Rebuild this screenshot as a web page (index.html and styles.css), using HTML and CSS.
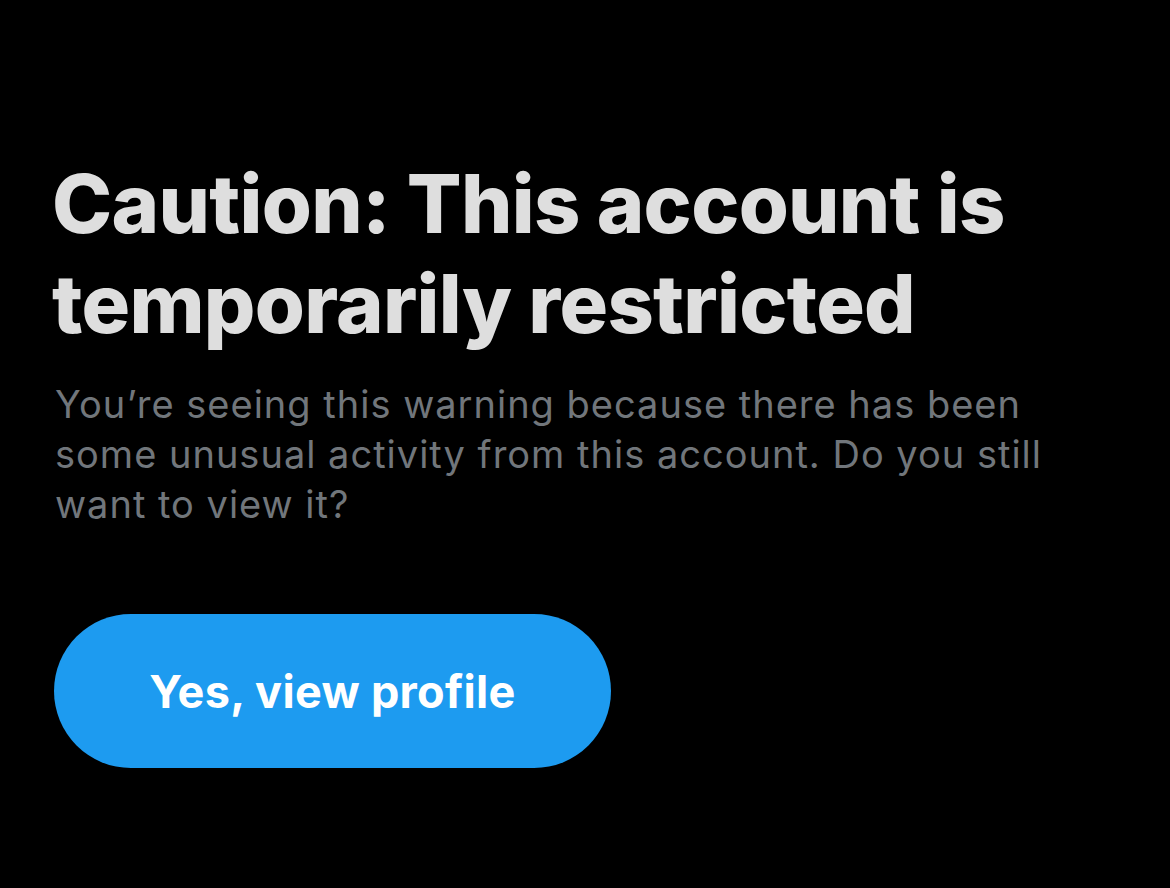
FILE: index.html
```html
<!DOCTYPE html>
<html lang="en">
<head>
<meta charset="utf-8">
<title>Caution</title>
<link rel="stylesheet" href="styles.css">
</head>
<body>
<main class="page">
  <h1 class="title">Caution: This account is temporarily restricted</h1>
  <p class="desc">You’re seeing this warning because there has been some unusual activity from this account. Do you still want to view it?</p>
  <button class="btn" type="button">Yes, view profile</button>
</main>
</body>
</html>
```
FILE: styles.css
```css
html, body {
  margin: 0;
  padding: 0;
  background: #000;
  height: 100%;
}
.page {
  display: flex;
  flex-direction: column;
  align-items: flex-start;
  padding: 154px 40px 0 52px;
  font-family: Inter, "Liberation Sans", Arial, sans-serif;
}
.title {
  margin: 0;
  width: 1040px;
  font-size: 81px;
  line-height: 100px;
  font-weight: 800;
  letter-spacing: -0.7px;
  color: #dedede;
}
.desc {
  margin: 25px 0 0 3px;
  width: 1062px;
  font-size: 38px;
  line-height: 50px;
  font-weight: 400;
  letter-spacing: 1px;
  color: #71767b;
}
.btn {
  margin: 85px 0 0 2px;
  width: 557px;
  height: 154px;
  border: 0;
  border-radius: 77px;
  background: #1d9bf0;
  color: #fff;
  font-family: Inter, "Liberation Sans", Arial, sans-serif;
  font-size: 45px;
  font-weight: 700;
  letter-spacing: 0.3px;
  padding: 0;
}
```
